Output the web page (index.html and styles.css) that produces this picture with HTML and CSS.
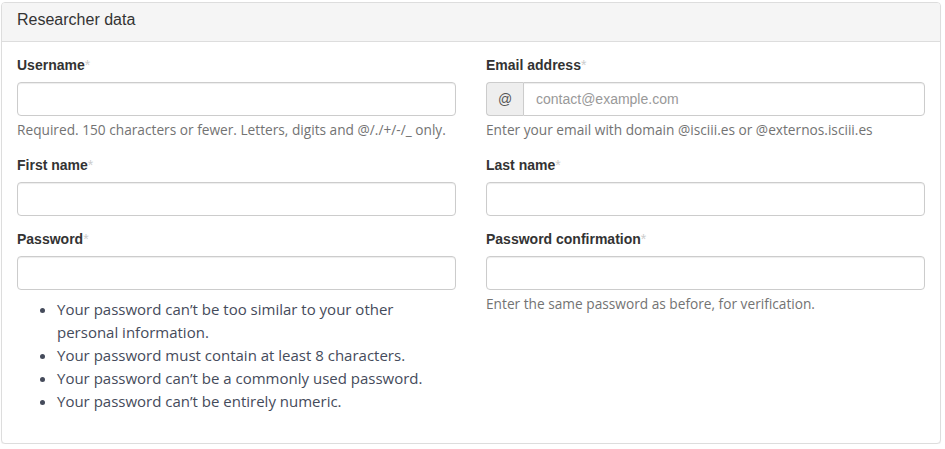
FILE: index.html
```html
<!DOCTYPE html>
<html>
<head>
<meta charset="utf-8">
<link rel="stylesheet" href="styles.css">
</head>
<body>
<div class="panel">
  <div class="panel-heading">Researcher data</div>
  <div class="panel-body">
    <div class="row">
      <div class="col">
        <div class="form-group">
          <label class="label">Username<span class="req">*</span></label>
          <input class="input" type="text">
          <p class="help">Required. 150 characters or fewer. Letters, digits and @/./+/-/_ only.</p>
        </div>
      </div>
      <div class="col">
        <div class="form-group">
          <label class="label">Email address<span class="req">*</span></label>
          <div class="input-group">
            <span class="addon">@</span>
            <input class="input grouped" type="text" placeholder="contact@example.com">
          </div>
          <p class="help">Enter your email with domain @isciii.es or @externos.isciii.es</p>
        </div>
      </div>
    </div>
    <div class="row">
      <div class="col">
        <div class="form-group tight">
          <label class="label">First name<span class="req">*</span></label>
          <input class="input" type="text">
        </div>
      </div>
      <div class="col">
        <div class="form-group tight">
          <label class="label">Last name<span class="req">*</span></label>
          <input class="input" type="text">
        </div>
      </div>
    </div>
    <div class="row">
      <div class="col">
        <div class="form-group">
          <label class="label">Password<span class="req">*</span></label>
          <input class="input" type="password">
          <ul class="rules">
            <li>Your password can’t be too similar to your other personal information.</li>
            <li>Your password must contain at least 8 characters.</li>
            <li>Your password can’t be a commonly used password.</li>
            <li>Your password can’t be entirely numeric.</li>
          </ul>
        </div>
      </div>
      <div class="col">
        <div class="form-group">
          <label class="label">Password confirmation<span class="req">*</span></label>
          <input class="input" type="password">
          <p class="help">Enter the same password as before, for verification.</p>
        </div>
      </div>
    </div>
  </div>
</div>
</body>
</html>
```
FILE: styles.css
```css
* { box-sizing: border-box; }
html, body { margin: 0; padding: 0; background: #fff; }
body {
  font-family: "Liberation Sans", Arial, sans-serif;
  font-size: 14px;
  line-height: 20px;
  color: #333;
  padding: 2px 4px 0 1px;
}
.panel {
  width: 940px;
  border: 1px solid #ddd;
  border-radius: 4px;
  background: #fff;
  box-shadow: 0 1px 1px rgba(0,0,0,0.05);
}
.panel-heading {
  background: #f5f5f5;
  border-bottom: 1px solid #ddd;
  border-radius: 3px 3px 0 0;
  padding: 8px 15px 12px;
  font-size: 16px;
  line-height: 18px;
  color: #333;
}
.panel-body {
  padding: 13px 15px 15px;
}
.row {
  display: grid;
  grid-template-columns: 1fr 1fr;
  column-gap: 30px;
}
.form-group { margin-bottom: 15px; }
.form-group.tight { margin-bottom: 13px; }
.label {
  display: block;
  font-weight: bold;
  margin-bottom: 7px;
}
.req { color: #ccc; font-weight: normal; }
.input {
  display: block;
  width: 100%;
  height: 34px;
  border: 1px solid #ccc;
  border-radius: 4px;
  box-shadow: inset 0 1px 1px rgba(0,0,0,0.075);
  padding: 6px 12px;
  font-family: "Liberation Sans", Arial, sans-serif;
  font-size: 14px;
  color: #555;
  background: #fff;
}
.input::placeholder { color: #999; }
.input-group { display: flex; }
.addon {
  width: 37px;
  height: 34px;
  flex: none;
  background: #eee;
  border: 1px solid #ccc;
  border-right: none;
  border-radius: 4px 0 0 4px;
  display: flex;
  align-items: center;
  justify-content: center;
  color: #555;
  font-size: 14px;
}
.grouped { border-radius: 0 4px 4px 0; flex: 1; padding-left: 12px; }
.help {
  margin: 4px 0 10px;
  font-family: "Open Sans", sans-serif;
  font-size: 13.7px;
  line-height: 20px;
  color: #737373;
}
.rules {
  margin: 8px 0 10px;
  padding-left: 40px;
  font-family: "Open Sans", sans-serif;
  font-size: 15px;
  line-height: 23px;
  color: #454b5b;
}
```
